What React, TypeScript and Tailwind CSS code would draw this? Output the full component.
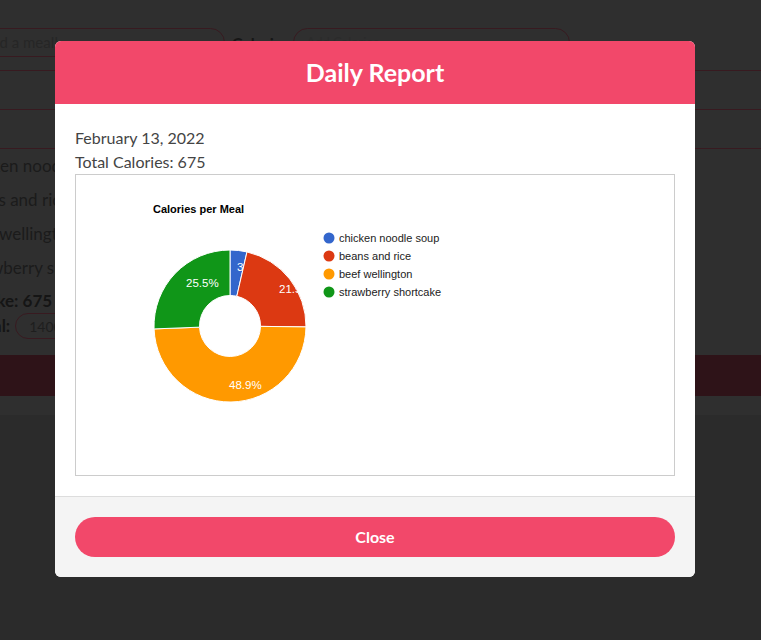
import React from 'react';

const CX = 154;
const CY = 151;
const R = 76;
const HOLE = 30.5;

const slices = [
  { name: 'chicken noodle soup', color: '#3366cc', from: 0, to: 12.9, label: '3.6%', x: 161, y: 96 },
  { name: 'beans and rice', color: '#dc3912', from: 12.9, to: 90.7, label: '21.5%', x: 203, y: 118 },
  { name: 'beef wellington', color: '#ff9900', from: 90.7, to: 267.8, label: '48.9%', x: 153, y: 214 },
  { name: 'strawberry shortcake', color: '#109618', from: 267.8, to: 360, label: '25.5%', x: 110, y: 112 },
];

function pt(a: number, rad: number) {
  const t = (a * Math.PI) / 180;
  return [CX + rad * Math.sin(t), CY - rad * Math.cos(t)];
}

function slicePath(a0: number, a1: number) {
  const large = a1 - a0 > 180 ? 1 : 0;
  const [x0, y0] = pt(a0, R);
  const [x1, y1] = pt(a1, R);
  const [x2, y2] = pt(a1, HOLE);
  const [x3, y3] = pt(a0, HOLE);
  return `M${x0} ${y0} A${R} ${R} 0 ${large} 1 ${x1} ${y1} L${x2} ${y2} A${HOLE} ${HOLE} 0 ${large} 0 ${x3} ${y3} Z`;
}

function Chart() {
  return (
    <svg width="598" height="300" viewBox="0 0 598 300" style={{ fontFamily: '"Liberation Sans", Arial, sans-serif' }}>
      <defs>
        {slices.map((s, i) => (
          <clipPath id={`clip-${i}`} key={s.name}>
            <path d={slicePath(s.from, s.to)} />
          </clipPath>
        ))}
      </defs>
      <text x="77" y="38" fontSize="11" fontWeight="bold" fill="#000">Calories per Meal</text>
      {slices.map((s) => (
        <path key={s.name} d={slicePath(s.from, s.to)} fill={s.color} stroke="#fff" strokeWidth="1" />
      ))}
      {slices.map((s, i) => (
        <text key={s.label} x={s.x} y={s.y} fontSize="11.5" fill="#fff" clipPath={`url(#clip-${i})`}>{s.label}</text>
      ))}
      {slices.map((s, i) => (
        <g key={`lg-${s.name}`}>
          <circle cx="253" cy={63 + i * 18} r="5.5" fill={s.color} />
          <text x="263" y={67 + i * 18} fontSize="11" fill="#222">{s.name}</text>
        </g>
      ))}
    </svg>
  );
}

function Backdrop() {
  return (
    <div className="h-[415px] bg-[#2f2f2f] text-[16px] text-[#1b1b1b]" style={{ fontFamily: 'Lato, "Noto Sans", sans-serif' }}>
      <div className="h-[28px]" />
      <div className="flex h-[29px] items-center">
        <div className="ml-[-60px] flex h-[29px] w-[285px] shrink-0 items-center rounded-[15px] border border-[#381a20] pl-[40px] text-[15px] text-[#262626]">
          Add a meal!
        </div>
        <span className="ml-[7px] font-bold text-[#161616]">Calories</span>
        <div className="ml-[4px] flex h-[29px] w-[277px] shrink-0 items-center rounded-[15px] border border-[#381a20] pl-3 text-[13px] text-[#2b2b2b]">
          Add Calories...
        </div>
      </div>
      <div className="h-[13px]" />
      <div className="h-[40px] border-y border-[#381a20]" />
      <div className="h-[39px] border-b border-[#381a20]" />
      <div className="ml-[-38px] text-[17px]">
        <div className="flex h-[34px] items-center">chicken noodle soup</div>
        <div className="flex h-[34px] items-center">beans and rice</div>
        <div className="flex h-[34px] items-center">beef wellington</div>
        <div className="flex h-[34px] items-center">strawberry shortcake</div>
      </div>
      <div className="ml-[-74px] flex h-[28px] items-end text-[17px] font-bold text-[#151515]">Total Intake: 675</div>
      <div className="ml-[-29px] flex h-[26px] items-center">
        <span className="text-[17px] font-bold text-[#151515]">Goal:</span>
        <div className="ml-[5px] flex h-[26px] w-[120px] items-center rounded-[13px] border border-[#381a20] pl-[13px] text-[14px] text-[#1e1e1e]">
          1400
        </div>
      </div>
      <div className="h-[16px]" />
      <div className="h-[41px] bg-[#2e1318]" />
    </div>
  );
}

export default function App() {
  return (
    <div className="relative h-[640px] w-full overflow-hidden bg-[#2b2b2b]">
      <Backdrop />
      <div
        className="absolute left-[55px] top-[41px] w-[640px] overflow-hidden rounded-[6px] bg-white"
        style={{ fontFamily: 'Lato, "Noto Sans", sans-serif' }}
      >
        <div className="flex h-[63px] items-center justify-center bg-[#f2486a] text-[25px] font-bold text-white">
          Daily Report
        </div>
        <div className="px-5 pb-5 pt-[22px]">
          <div className="text-[16px] leading-[24px] text-[#444]">February 13, 2022</div>
          <div className="text-[16px] leading-[24px] text-[#444]">Total Calories: 675</div>
          <div className="h-[302px] border border-[#ccc]">
            <Chart />
          </div>
        </div>
        <div className="border-t border-[#ddd] bg-[#f4f4f4] p-5">
          <button className="flex h-[40px] w-full items-center justify-center rounded-full bg-[#f2486a] text-[16px] font-bold text-white">
            Close
          </button>
        </div>
      </div>
    </div>
  );
}
